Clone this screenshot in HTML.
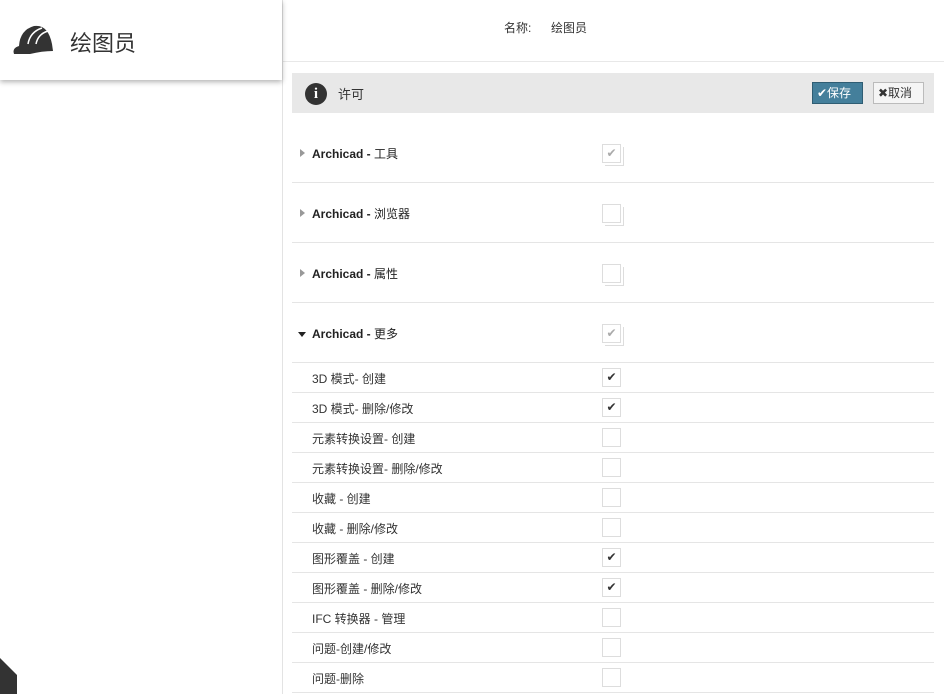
<!DOCTYPE html>
<html><head><meta charset="utf-8"><style>
*{box-sizing:border-box;margin:0;padding:0}
body{width:944px;height:694px;overflow:hidden;background:#fff;font-family:"Liberation Sans","Noto Sans CJK SC",sans-serif;color:#333;position:relative}
.side{position:absolute;left:0;top:0;width:282px;height:80px;background:#fff;box-shadow:0 2px 5px rgba(0,0,0,.3);z-index:2}
.side .t{position:absolute;left:70px;top:26px;font-size:22px;color:#333}
.vline{position:absolute;left:282px;top:0;width:1px;height:694px;background:#e3e3e3}
.hdr{position:absolute;left:283px;top:0;width:661px;height:62px;border-bottom:1px solid #e8e8e8;font-size:12px}
.bar{position:absolute;left:292px;top:73px;width:642px;height:40px;background:#e8e8e8}
.btn{position:absolute;top:9px;height:22px;font-size:12px;line-height:20px;padding:0 4px}
.row{position:absolute;left:292px;width:642px;border-bottom:1px solid #e5e5e5;font-size:12px}
.g{height:60px}
.g .l{position:absolute;left:20px;top:22px;color:#222}
.g .l b{font-weight:bold}
.s{height:30px}
.s .l{position:absolute;left:20px;top:7px;color:#333}
.cb{position:absolute;left:310px;width:19px;height:19px;border:1px solid #ddd;background:#fff;font-size:12px;text-align:center;line-height:17px;color:#333}
.g .cb{top:21px;box-shadow:2px 2px 0 #fff,3px 3px 0 #ddd;color:#aaa}
.s .cb{top:5px}
.arr{position:absolute;left:8px;top:26px;width:0;height:0;border-top:4px solid transparent;border-bottom:4px solid transparent;border-left:5px solid #999}
.arrd{position:absolute;left:6px;top:29px;border-left:4px solid transparent;border-right:4px solid transparent;border-top:5px solid #222}
</style></head><body>
<div class="side">
<svg style="position:absolute;left:12px;top:22px" width="42" height="33" viewBox="0 0 42 33"><path d="M2 32 Q0 26 7 24 Q8 8 22 4 Q36 2 40 22 L41 29 Q30 29 18 32 Z" fill="#333"/><path d="M16 22 Q18 10 30 6" stroke="#fff" stroke-width="1.5" fill="none"/><path d="M24 22 Q26 12 36 9" stroke="#fff" stroke-width="1.5" fill="none"/></svg>
<div class="t">绘图员</div></div>
<div class="vline"></div>
<div class="hdr"><span style="position:absolute;left:221px;top:19px">名称:</span><span style="position:absolute;left:268px;top:19px">绘图员</span></div>
<div class="bar">
<div style="position:absolute;left:13px;top:10px;width:22px;height:22px;border-radius:50%;background:#333;color:#fff;font:bold 15px 'Liberation Serif',serif;text-align:center;line-height:22px">i</div>
<span style="position:absolute;left:46px;top:11px;font-size:13px">许可</span>
<div class="btn" style="left:520px;width:51px;background:#447f9b;border:1px solid #2f5d73;color:#fff">✔保存</div>
<div class="btn" style="left:581px;width:51px;background:#f5f5f5;border:1px solid #bbb;color:#333">✖取消</div>
</div>
<div class="row g" style="top:123px"><div class="arr"></div><span class="l"><b>Archicad -</b> 工具</span><div class="cb">✔</div></div>
<div class="row g" style="top:183px"><div class="arr"></div><span class="l"><b>Archicad -</b> 浏览器</span><div class="cb"></div></div>
<div class="row g" style="top:243px"><div class="arr"></div><span class="l"><b>Archicad -</b> 属性</span><div class="cb"></div></div>
<div class="row g" style="top:303px"><div class="arrd"></div><span class="l"><b>Archicad -</b> 更多</span><div class="cb">✔</div></div>
<div class="row s" style="top:363px"><span class="l">3D 模式- 创建</span><div class="cb">✔</div></div>
<div class="row s" style="top:393px"><span class="l">3D 模式- 删除/修改</span><div class="cb">✔</div></div>
<div class="row s" style="top:423px"><span class="l">元素转换设置- 创建</span><div class="cb"></div></div>
<div class="row s" style="top:453px"><span class="l">元素转换设置- 删除/修改</span><div class="cb"></div></div>
<div class="row s" style="top:483px"><span class="l">收藏 - 创建</span><div class="cb"></div></div>
<div class="row s" style="top:513px"><span class="l">收藏 - 删除/修改</span><div class="cb"></div></div>
<div class="row s" style="top:543px"><span class="l">图形覆盖 - 创建</span><div class="cb">✔</div></div>
<div class="row s" style="top:573px"><span class="l">图形覆盖 - 删除/修改</span><div class="cb">✔</div></div>
<div class="row s" style="top:603px"><span class="l">IFC 转换器 - 管理</span><div class="cb"></div></div>
<div class="row s" style="top:633px"><span class="l">问题-创建/修改</span><div class="cb"></div></div>
<div class="row s" style="top:663px"><span class="l">问题-删除</span><div class="cb"></div></div>
<svg style="position:absolute;left:0;top:658px" width="17" height="36"><path d="M0 0 L17 17 L17 36 L0 36 Z" fill="#333"/></svg>
</body></html>
